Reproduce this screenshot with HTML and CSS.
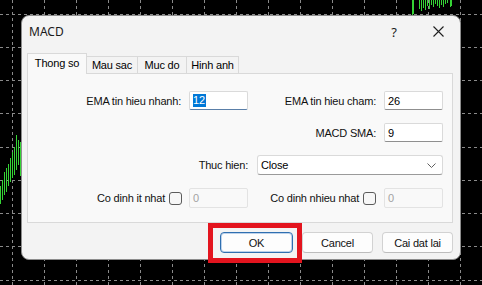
FILE: index.html
```html
<!DOCTYPE html>
<html>
<head>
<meta charset="utf-8">
<title>MACD</title>
<link rel="stylesheet" href="styles.css">
</head>
<body>
<div class="desk">
  <svg class="chart" width="482" height="285" viewBox="0 0 482 285">
    <g stroke="#8a8a8a" stroke-width="1" stroke-dasharray="3 3">
      <line x1="12.5" y1="0" x2="12.5" y2="285"/>
      <line x1="44.5" y1="0" x2="44.5" y2="285"/>
      <line x1="76.5" y1="0" x2="76.5" y2="285"/>
      <line x1="108.5" y1="0" x2="108.5" y2="285"/>
      <line x1="140.5" y1="0" x2="140.5" y2="285"/>
      <line x1="172.5" y1="0" x2="172.5" y2="285"/>
      <line x1="204.5" y1="0" x2="204.5" y2="285"/>
      <line x1="236.5" y1="0" x2="236.5" y2="285"/>
      <line x1="268.5" y1="0" x2="268.5" y2="285"/>
      <line x1="300.5" y1="0" x2="300.5" y2="285"/>
      <line x1="332.5" y1="0" x2="332.5" y2="285"/>
      <line x1="364.5" y1="0" x2="364.5" y2="285"/>
      <line x1="396.5" y1="0" x2="396.5" y2="285"/>
      <line x1="428.5" y1="0" x2="428.5" y2="285"/>
      <line x1="460.5" y1="0" x2="460.5" y2="285"/>
      <line x1="0" y1="14.5" x2="482" y2="14.5"/>
      <line x1="0" y1="47.5" x2="482" y2="47.5"/>
      <line x1="0" y1="80.5" x2="482" y2="80.5"/>
      <line x1="0" y1="113.5" x2="482" y2="113.5"/>
      <line x1="0" y1="147.5" x2="482" y2="147.5"/>
      <line x1="0" y1="180.5" x2="482" y2="180.5"/>
      <line x1="0" y1="213.5" x2="482" y2="213.5"/>
      <line x1="0" y1="246.5" x2="482" y2="246.5"/>
      <line x1="0" y1="280.5" x2="482" y2="280.5"/>
    </g>
    <g stroke="#35d435" stroke-width="1">
      <line x1="412.5" y1="0" x2="412.5" y2="16"/>
      <line x1="413.5" y1="0" x2="413.5" y2="14"/>
      <line x1="419.5" y1="0" x2="419.5" y2="9"/>
      <line x1="421.5" y1="0" x2="421.5" y2="11"/>
      <line x1="423.5" y1="0" x2="423.5" y2="8"/>
      <line x1="425.5" y1="0" x2="425.5" y2="10"/>
      <line x1="427.5" y1="0" x2="427.5" y2="6"/>
      <line x1="429.5" y1="0" x2="429.5" y2="9"/>
      <line x1="431.5" y1="0" x2="431.5" y2="5"/>
      <line x1="433.5" y1="0" x2="433.5" y2="7"/>
      <line x1="435.5" y1="0" x2="435.5" y2="4"/>
      <line x1="437.5" y1="0" x2="437.5" y2="6"/>
      <line x1="439.5" y1="0" x2="439.5" y2="8"/>
      <line x1="441.5" y1="0" x2="441.5" y2="5"/>
      <line x1="443.5" y1="0" x2="443.5" y2="7"/>
      <line x1="445.5" y1="0" x2="445.5" y2="4"/>
      <line x1="447.5" y1="0" x2="447.5" y2="3"/>
      <line x1="450.5" y1="0" x2="450.5" y2="7"/>
      <line x1="451.5" y1="0" x2="451.5" y2="6"/>
      <line x1="0.5" y1="186" x2="0.5" y2="204"/>
      <line x1="2.5" y1="180" x2="2.5" y2="200"/>
      <line x1="4.5" y1="172" x2="4.5" y2="195"/>
      <line x1="6.5" y1="168" x2="6.5" y2="192"/>
      <line x1="8.5" y1="164" x2="8.5" y2="186"/>
      <line x1="10.5" y1="158" x2="10.5" y2="182"/>
      <line x1="12.5" y1="152" x2="12.5" y2="178"/>
      <line x1="14.5" y1="147" x2="14.5" y2="175"/>
      <line x1="16.5" y1="135" x2="16.5" y2="170"/>
      <line x1="18.5" y1="140" x2="18.5" y2="165"/>
      <line x1="20.5" y1="142" x2="20.5" y2="176"/>
    </g>
  </svg>

  <div class="dialog">
    <div class="titlebar">
      <span class="title">MACD</span>
      <span class="help">?</span>
      <span class="close">
        <svg width="11" height="11" viewBox="0 0 11 11"><path d="M0.5 0.5 L10.5 10.5 M10.5 0.5 L0.5 10.5" stroke="#1f1f1f" stroke-width="1.1" fill="none"/></svg>
      </span>
    </div>
    <div class="content">
      <div class="tabs">
        <div class="tab tab-active">Thong so</div>
        <div class="tab tab-2">Mau sac</div>
        <div class="tab tab-3">Muc do</div>
        <div class="tab tab-4">Hinh anh</div>
      </div>
      <div class="panel">
        <div class="form">
          <div class="lbl">EMA tin hieu nhanh:</div>
          <div class="inp inp-focus"><span class="selected">12</span></div>
          <div class="lbl">EMA tin hieu cham:</div>
          <div class="inp">26</div>

          <div class="lbl lbl-r2">MACD SMA:</div>
          <div class="inp inp-r2">9</div>

          <div class="lbl lbl-wide">Thuc hien:</div>
          <div class="select">
            <span>Close</span>
            <svg width="9" height="5" viewBox="0 0 9 5"><path d="M0.5 0.5 L4.5 4.5 L8.5 0.5" stroke="#606060" stroke-width="1" fill="none"/></svg>
          </div>

          <div class="lbl lbl-chk r4 c1"><span>Co dinh it nhat</span><span class="box"></span></div>
          <div class="inp inp-dis r4 c2">0</div>
          <div class="lbl lbl-chk lbl-chk2 r4 c3"><span>Co dinh nhieu nhat</span><span class="box"></span></div>
          <div class="inp inp-dis r4 c4">0</div>
        </div>
      </div>
      <div class="buttons">
        <div class="btn btn-default">OK</div>
        <div class="btn">Cancel</div>
        <div class="btn">Cai dat lai</div>
      </div>
    </div>
  </div>

  <div class="mark"></div>
</div>
</body>
</html>
```

FILE: styles.css
```css
* { box-sizing: border-box; }

html, body {
  margin: 0;
  padding: 0;
  background: #000;
}

.desk {
  position: relative;
  width: 482px;
  height: 285px;
  overflow: hidden;
  background: #000;
  font-family: "Liberation Sans", Arial, sans-serif;
  font-size: 11px;
  letter-spacing: -0.2px;
  color: #000;
}

.chart {
  position: absolute;
  left: 0;
  top: 0;
  display: block;
}

.dialog {
  position: absolute;
  left: 21px;
  top: 15px;
  width: 440px;
  height: 245px;
  background: #f3f3f3;
  border: 1px solid #8c8c8c;
  border-radius: 8px;
  display: flex;
  flex-direction: column;
}

.titlebar {
  height: 31px;
  display: flex;
  align-items: center;
  padding: 0 12px 0 7px;
}

.title {
  font-family: "Noto Sans", "Open Sans", sans-serif;
  font-size: 12px;
  letter-spacing: 0;
  color: #1a1a1a;
  flex: 1;
}

.help {
  width: 20px;
  text-align: center;
  font-family: "Noto Sans", sans-serif;
  font-size: 13px;
  letter-spacing: 0;
  color: #1a1a1a;
  margin-right: 24px;
}

.close {
  width: 20px;
  display: flex;
  justify-content: center;
  align-items: center;
}

.content {
  padding: 6px 7px 0 5px;
  display: flex;
  flex-direction: column;
}

.tabs {
  display: flex;
  align-items: flex-end;
  height: 20px;
}

.tab {
  height: 17px;
  line-height: 16px;
  text-align: center;
  background: #f3f3f3;
  border: 1px solid #d9d9d9;
  border-left: none;
  border-bottom: none;
}

.tab-active {
  position: relative;
  z-index: 1;
  width: 60px;
  height: 21px;
  line-height: 19px;
  margin-bottom: -1px;
  background: #f9f9f9;
  border-left: 1px solid #d9d9d9;
}

.tab-2 { width: 51px; }
.tab-3 { width: 49px; }
.tab-4 { width: 52px; }

.panel {
  height: 150px;
  background: #f9f9f9;
  border: 1px solid #d9d9d9;
  padding-top: 17px;
}

.form {
  display: grid;
  grid-template-columns: 161px 59px 136px 59px;
  grid-template-rows: 19px 19px 20px 20px;
  row-gap: 13px;
}

.lbl {
  display: flex;
  align-items: center;
  justify-content: flex-end;
  padding-right: 8px;
  white-space: nowrap;
  color: #111;
}

.lbl-r2 { grid-column: 3; grid-row: 2; }
.inp-r2 { grid-column: 4; grid-row: 2; }

.r4 { grid-row: 4; }
.c1 { grid-column: 1; }
.c2 { grid-column: 2; }
.c3 { grid-column: 3; }
.c4 { grid-column: 4; }

.lbl-wide {
  grid-column: 1 / span 2;
  grid-row: 3;
  padding-right: 0;
}

.select {
  grid-column: 3 / span 2;
  grid-row: 3;
  margin-left: 9px;
  background: #fff;
  border: 1px solid #dadada;
  border-bottom-color: #9a9a9a;
  border-radius: 3px;
  display: flex;
  align-items: center;
  justify-content: space-between;
  padding: 0 6px 0 3px;
}

.inp {
  background: #fff;
  border: 1px solid #dadada;
  border-bottom-color: #8f8f8f;
  border-radius: 2px;
  display: flex;
  align-items: center;
  padding-left: 3px;
}

.inp-focus {
  border-bottom-color: #5a7fa8;
}

.selected {
  background: #0078d7;
  color: #fff;
  line-height: 13px;
  padding: 0 1px 0 0;
}

.inp-dis {
  background: #f9f9f9;
  border: 1px solid #e3e3e3;
  color: #a3a3a3;
}

.lbl-chk {
  padding-right: 7px;
  gap: 4px;
}

.lbl-chk2 { padding-right: 8px; }

.box {
  width: 13px;
  height: 13px;
  border: 1px solid #5c5c5c;
  border-radius: 3px;
  background: #f7f7f7;
}

.buttons {
  display: flex;
  justify-content: flex-end;
  gap: 9px;
  margin-top: 9px;
}

.btn {
  width: 71px;
  height: 21px;
  background: #fdfdfd;
  border: 1px solid #d2d2d2;
  border-bottom-color: #bdbdbd;
  border-radius: 4px;
  display: flex;
  align-items: center;
  justify-content: center;
  color: #111;
}

.btn-default {
  width: 73px;
  border: 1px solid #2f6fb0;
  box-shadow: inset 0 0 0 1px rgba(70, 130, 200, 0.35);
}

.mark {
  position: absolute;
  left: 208px;
  top: 223px;
  width: 94px;
  height: 40px;
  border: 5px solid #e3141e;
}
```
